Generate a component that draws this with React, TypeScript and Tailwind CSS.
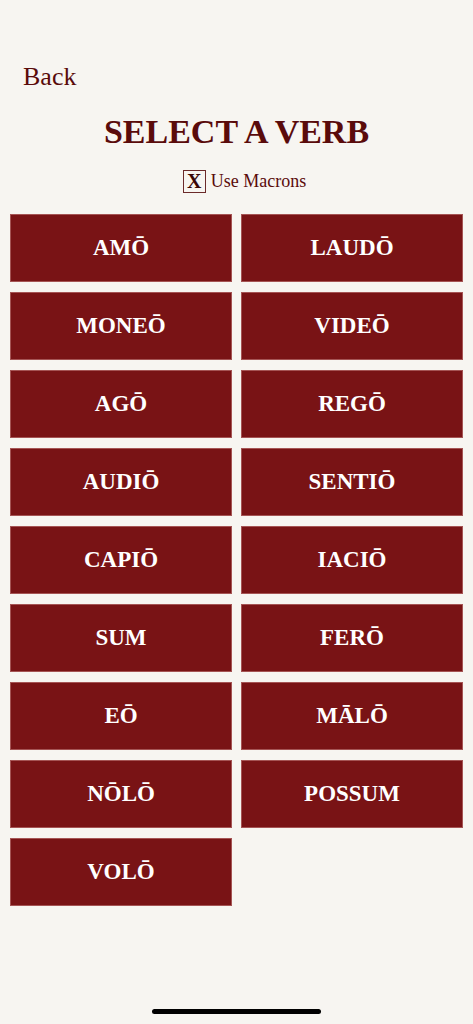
import React, { useState } from "react";

const verbs = [
  "AMŌ",
  "LAUDŌ",
  "MONEŌ",
  "VIDEŌ",
  "AGŌ",
  "REGŌ",
  "AUDIŌ",
  "SENTIŌ",
  "CAPIŌ",
  "IACIŌ",
  "SUM",
  "FERŌ",
  "EŌ",
  "MĀLŌ",
  "NŌLŌ",
  "POSSUM",
  "VOLŌ",
];

const serif = "font-['Liberation_Serif','DejaVu_Serif',serif]";

export default function App() {
  const [macrons, setMacrons] = useState(true);

  return (
    <div className={`min-h-[1024px] bg-[#f7f5f1] ${serif} flex flex-col`}>
      <div className="px-[23px] pt-[62px]">
        <button className="text-[26px] leading-[30px] text-[#5a0b0b]">Back</button>
      </div>

      <h1 className="mt-[20px] text-center text-[34px] leading-[40px] font-bold text-[#5a0b0b]">
        SELECT A VERB
      </h1>

      <div className="mt-[17px] pl-[16px] flex items-center justify-center gap-[5px]">
        <button
          onClick={() => setMacrons(!macrons)}
          className="w-[23px] h-[23px] border border-[#6b2a2a] flex items-center justify-center text-[20px] leading-none font-bold text-[#3a0707]"
        >
          {macrons ? "X" : ""}
        </button>
        <span className="text-[18px] leading-[24px] text-[#5a0b0b]">Use Macrons</span>
      </div>

      <div className="mt-[21px] px-[10px] grid grid-cols-2 gap-x-[9px] gap-y-[10px]">
        {verbs.map((v) => (
          <button
            key={v}
            className="h-[68px] bg-[#791315] border border-[#a55454] flex items-center justify-center text-white text-[23px] font-bold"
          >
            {v}
          </button>
        ))}
      </div>

      <div className="mt-auto pb-[10px] flex justify-center">
        <div className="w-[169px] h-[5px] rounded-full bg-black" />
      </div>
    </div>
  );
}
